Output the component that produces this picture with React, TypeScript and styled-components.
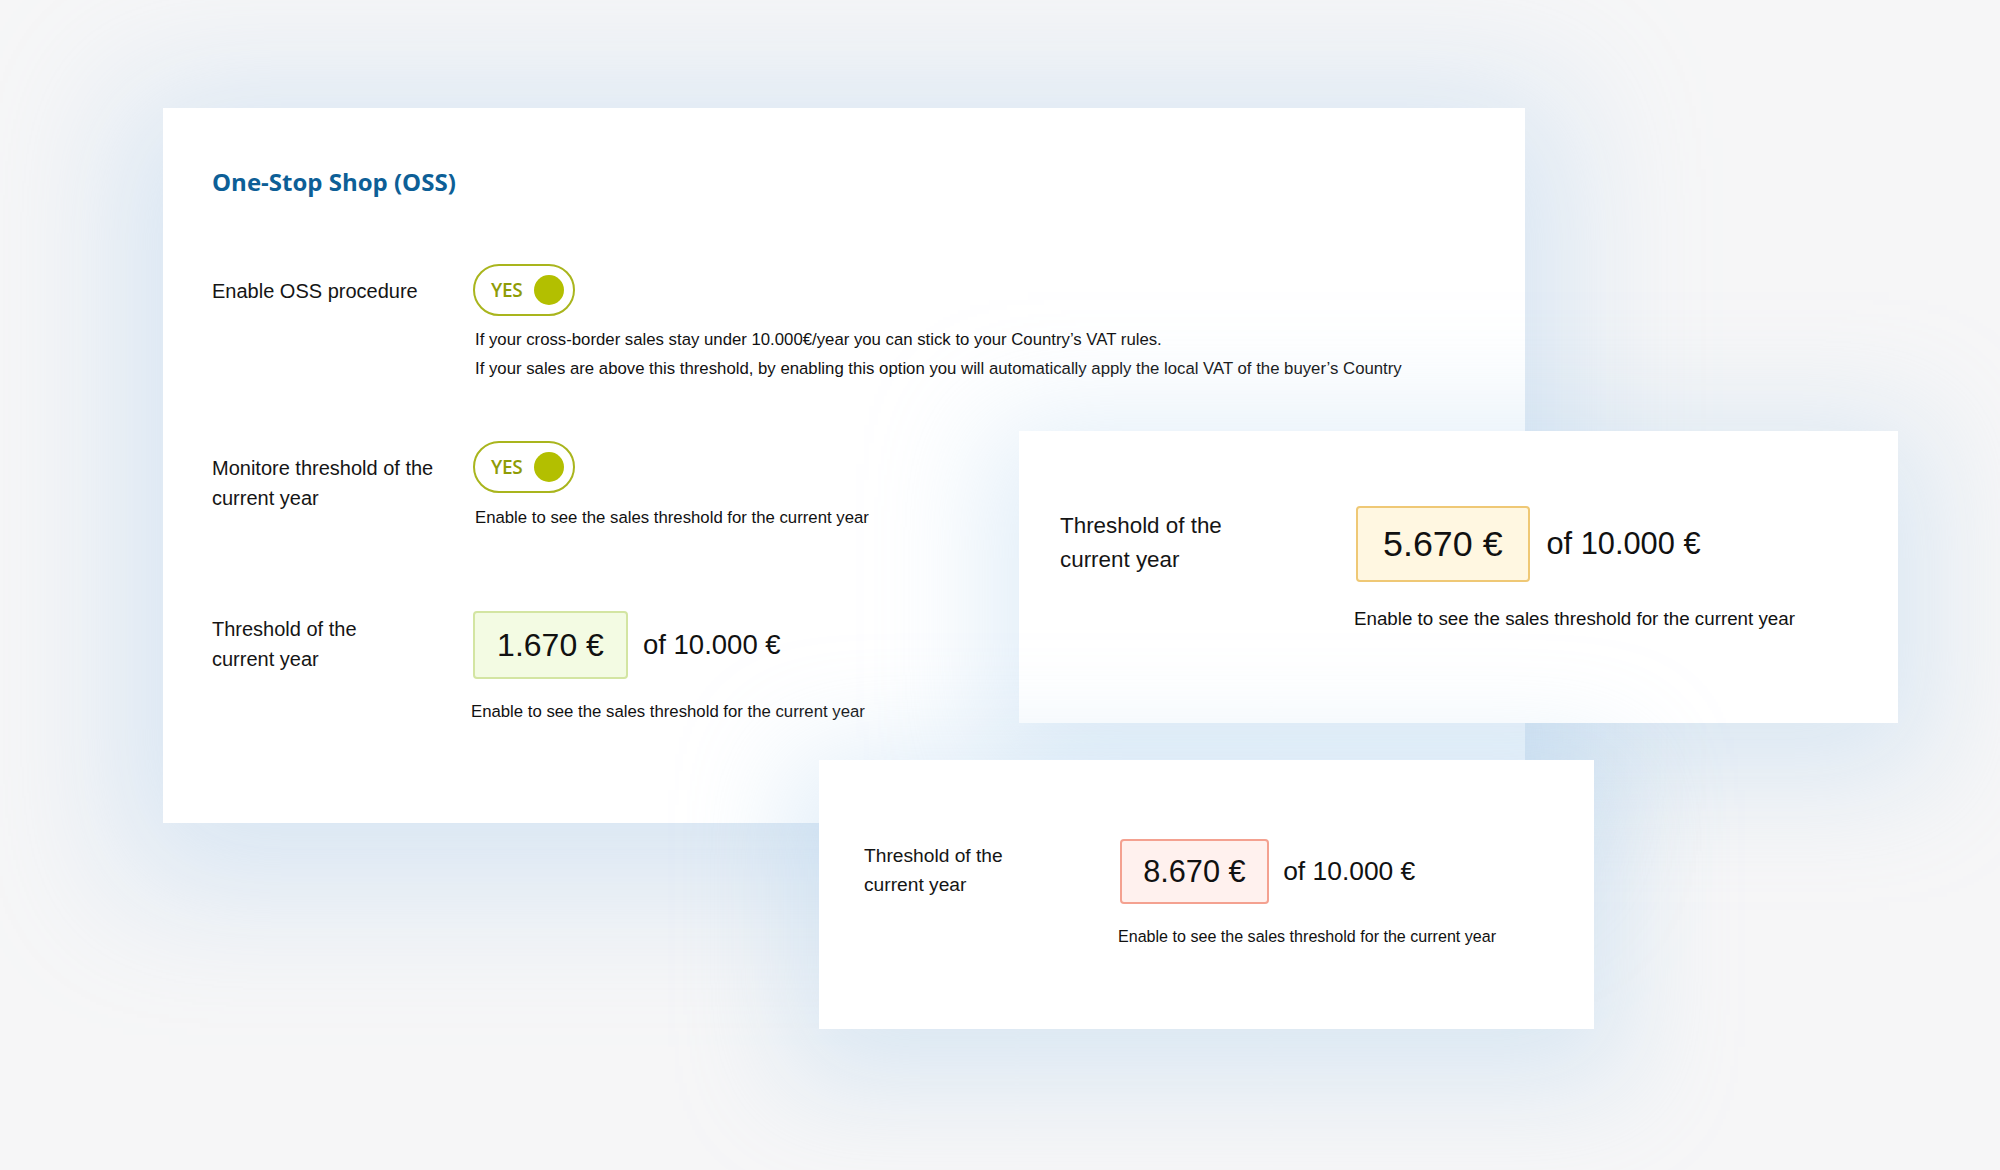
import React from 'react';
import styled, { createGlobalStyle } from 'styled-components';

type Tone = 'green' | 'amber' | 'red';

const tones: Record<Tone, { bg: string; border: string }> = {
  green: { bg: '#f3fbe3', border: '#d3e5a2' },
  amber: { bg: '#fff7e1', border: '#efc875' },
  red: { bg: '#fff1ee', border: '#f4a190' },
};

const GlobalStyle = createGlobalStyle`
  html, body {
    margin: 0;
    padding: 0;
  }

  body {
    width: 2000px;
    height: 1170px;
    overflow: hidden;
    background: #f6f6f7;
    font-family: 'Liberation Sans', Arial, sans-serif;
    color: #111;
  }
`;

const Stage = styled.div`
  position: relative;
  width: 2000px;
  height: 1170px;
  box-sizing: border-box;
  padding: 108px 0 0 163px;
`;

const MainCard = styled.section`
  width: 1362px;
  height: 715px;
  box-sizing: border-box;
  padding: 58px 0 0 49px;
  background: #fff;
  box-shadow: 0 24px 130px 40px rgba(175, 208, 238, 0.42);
`;

const FloatingCard = styled.section<{ $left: number; $top: number; $width: number; $height: number; $pad: number }>`
  position: absolute;
  left: ${(p) => p.$left}px;
  top: ${(p) => p.$top}px;
  width: ${(p) => p.$width}px;
  height: ${(p) => p.$height}px;
  box-sizing: border-box;
  padding: ${(p) => p.$pad}px 0 0 ${(p) => p.$pad - 34}px;
  background: #fff;
  box-shadow: 0 24px 110px 30px rgba(178, 210, 238, 0.4);
`;

const Title = styled.h2`
  margin: 0 0 66px;
  font-family: 'Open Sans', sans-serif;
  font-size: 24px;
  line-height: 32px;
  font-weight: 700;
  color: #0d5f97;
`;

const Row = styled.div<{ $labelWidth: number; $space?: number }>`
  display: grid;
  grid-template-columns: ${(p) => p.$labelWidth}px auto;
  align-items: start;
  margin-bottom: ${(p) => p.$space ?? 0}px;
`;

const Label = styled.div<{ $size: number; $offset: number }>`
  padding-top: ${(p) => p.$offset}px;
  font-size: ${(p) => p.$size}px;
  line-height: ${(p) => p.$size * 1.5}px;
  color: #151515;
`;

const Control = styled.div`
  display: flex;
  flex-direction: column;
  align-items: flex-start;
`;

const Toggle = styled.div`
  display: flex;
  align-items: center;
  justify-content: space-between;
  width: 102px;
  height: 52px;
  box-sizing: border-box;
  padding: 0 9px 0 16px;
  border: 2px solid #a9b51d;
  border-radius: 26px;
  background: #fff;
`;

const ToggleText = styled.span`
  font-family: 'Open Sans', sans-serif;
  font-size: 19px;
  font-weight: 600;
  color: #8f9c06;
  letter-spacing: -0.3px;
`;

const Knob = styled.span`
  width: 30px;
  height: 30px;
  border-radius: 50%;
  background: #b3bf00;
`;

const Hint = styled.p<{ $size: number; $gap: number; $shift?: number }>`
  margin: ${(p) => p.$gap}px 0 0 ${(p) => p.$shift ?? 2}px;
  font-size: ${(p) => p.$size}px;
  line-height: ${(p) => p.$size * 1.72}px;
  color: #111;
  white-space: nowrap;
`;

const AmountLine = styled.div`
  display: flex;
  align-items: center;
`;

const AmountBox = styled.div<{ $tone: Tone; $scale: number }>`
  display: flex;
  align-items: center;
  justify-content: center;
  width: ${(p) => 155 * p.$scale}px;
  height: ${(p) => 68 * p.$scale}px;
  box-sizing: border-box;
  border: 2px solid ${(p) => tones[p.$tone].border};
  border-radius: 4px;
  background: ${(p) => tones[p.$tone].bg};
  font-size: ${(p) => 32 * p.$scale}px;
  color: #111;
`;

const AmountTotal = styled.span<{ $scale: number }>`
  margin-left: ${(p) => 15 * p.$scale}px;
  font-size: ${(p) => 27.5 * p.$scale}px;
  color: #111;
`;

interface ThresholdProps {
  value: string;
  tone: Tone;
  scale?: number;
  labelWidth: number;
}

const ThresholdRow = ({ value, tone, scale = 1, labelWidth }: ThresholdProps) => (
  <Row $labelWidth={labelWidth}>
    <Label $size={20 * scale} $offset={3 * scale}>
      Threshold of the
      <br />
      current year
    </Label>
    <Control>
      <AmountLine>
        <AmountBox $tone={tone} $scale={scale}>
          {value}
        </AmountBox>
        <AmountTotal $scale={scale}>of 10.000 €</AmountTotal>
      </AmountLine>
      <Hint $size={16.75 * scale} $gap={19 * scale} $shift={-2}>
        Enable to see the sales threshold for the current year
      </Hint>
    </Control>
  </Row>
);

const YesToggle = () => (
  <Toggle>
    <ToggleText>YES</ToggleText>
    <Knob />
  </Toggle>
);

export default function App() {
  return (
    <>
      <GlobalStyle />
      <Stage>
        <MainCard>
          <Title>One-Stop Shop (OSS)</Title>

          <Row $labelWidth={261} $space={57}>
            <Label $size={20} $offset={12}>
              Enable OSS procedure
            </Label>
            <Control>
              <YesToggle />
              <Hint $size={16.75} $gap={10}>
                If your cross-border sales stay under 10.000€/year you can stick to your Country’s VAT rules.
                <br />
                If your sales are above this threshold, by enabling this option you will automatically apply the
                local VAT of the buyer’s Country
              </Hint>
            </Control>
          </Row>

          <Row $labelWidth={261} $space={79}>
            <Label $size={20} $offset={12}>
              Monitore threshold of the
              <br />
              current year
            </Label>
            <Control>
              <YesToggle />
              <Hint $size={16.75} $gap={11}>
                Enable to see the sales threshold for the current year
              </Hint>
            </Control>
          </Row>

          <ThresholdRow value="1.670 €" tone="green" labelWidth={261} />
        </MainCard>

        <FloatingCard $left={1019} $top={431} $width={879} $height={292} $pad={75}>
          <ThresholdRow value="5.670 €" tone="amber" scale={1.12} labelWidth={296} />
        </FloatingCard>

        <FloatingCard $left={819} $top={760} $width={775} $height={269} $pad={79}>
          <ThresholdRow value="8.670 €" tone="red" scale={0.96} labelWidth={256} />
        </FloatingCard>
      </Stage>
    </>
  );
}
